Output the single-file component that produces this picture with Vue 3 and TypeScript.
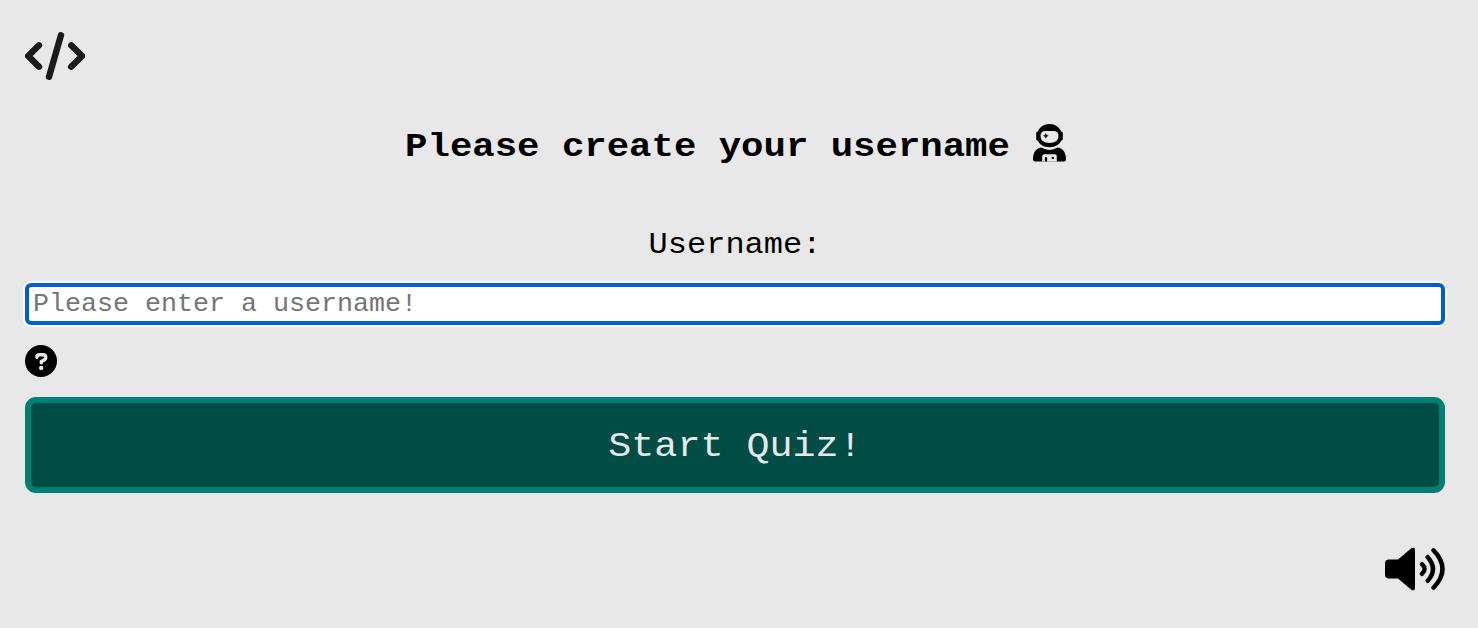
<script setup lang="ts">
import { ref } from 'vue'

const username = ref('')
</script>

<template>
  <main class="page">
    <svg class="code" viewBox="0 0 60 48" aria-hidden="true">
      <path d="M14 13.3 3.2 24 14 34.7M46.200 13.300 57 24 46.200 34.700M36 3.200 24 44.800" />
    </svg>
    <h1 class="title">
      <span class="heading-text">Please create your username</span>
      <svg class="astronaut" viewBox="0 0 34 38" aria-hidden="true">
        <path fill-rule="evenodd" d="M4.800 7.500C6.600 3 11 0 16.500 0s9.900 3 11.700 7.500q1.600.1 1.600 1.600v6q0 1.500-1.700 1.700C26.300 20.800 22 23.200 16.500 23.200S6.700 20.800 4.900 16.800Q3.200 16.600 3.200 15.100v-6q0-1.500 1.600-1.600ZM12.500 7Q7.500 7 7.500 11.700q0 7.200 9 7.200t9-7.200Q25.500 7 20.500 7Z" />
        <path d="m12.800 9 .9 1.900 2 .9-2 .9-.9 2-.9-2-2-.9 2-.9Z" />
        <path d="M8.200 23.600q8.300 4.800 16.600 0C31 24.500 33 30 33 35.500q0 2-2 2H2q-2 0-2-2C0 30 2 24.500 8.200 23.600Z" />
        <path class="suit" d="M9.200 32.200q0-2 2-2h10.600q2 0 2 2v5.300H9.200Z" />
        <path d="M11.900 34.200q0-1.100 1.100-1.100t1.100 1.100v3.300h-2.200Z" />
        <circle cx="19.800" cy="33.900" r="1.200" />
      </svg>
    </h1>
    <label class="label" for="username"><span class="label-text">Username:</span></label>
    <input id="username" v-model="username" class="field" type="text" placeholder="Please enter a username!" />
    <svg class="help" viewBox="0 0 32 32" aria-label="Help">
      <circle cx="16" cy="16" r="16" />
      <path d="M11.900 12.200Q11.900 9.800 14.600 9.800h3q3.200 0 3.200 2.700 0 1.500-1.600 2.400L16.300 16.500v1.300" />
      <circle class="dot" cx="16.200" cy="22.900" r="2.200" />
    </svg>
    <button class="start" type="button"><span class="start-text">Start Quiz!</span></button>
    <svg class="volume" viewBox="0 0 60 44" aria-label="Sound on">
      <path d="M4 12.500h9L26.300 1.300Q27.500.3 28.700.8 30 1.300 30 3v38q0 1.700-1.300 2.200-1.200.5-2.400-.5L13 31.500H4q-4 0-4-4v-11q0-4 4-4Z" />
      <path class="wave" d="M37 17.200q5.200 4.800 0 9.600M42.700 10.200Q53.300 22 42.700 33.800M48.500 3.300Q66.500 22 48.500 40.700" />
    </svg>
  </main>
</template>

<style>
html,
body {
  background: #e8e8e8;
}
</style>

<style scoped>
.page {
  display: flex;
  flex-direction: column;
  box-sizing: border-box;
  height: 628px;
  padding: 32px 33px 0 25px;
  overflow: hidden;
  background: #e8e8e8;
  color: #000;
  font-family: "Courier New", "Liberation Mono", monospace;
}
svg {
  display: block;
  flex: none;
}
.code {
  width: 60px;
  height: 48px;
  fill: none;
  stroke: #1b1b1b;
  stroke-width: 6.400;
  stroke-linecap: round;
  stroke-linejoin: round;
}
.title {
  display: flex;
  justify-content: center;
  gap: 23px;
  height: 42px;
  margin: 44px 0 0;
  padding-left: 2px;
  font-size: 37.333px;
  line-height: 42px;
  white-space: pre;
}
.heading-text,
.label-text,
.start-text {
  display: inline-block;
  transform: scaleY(0.9);
  transform-origin: 50% 100%;
}
.astronaut {
  width: 34px;
  height: 38px;
}
.suit {
  fill: #e8e8e8;
}
.label {
  height: 36px;
  margin-top: 60px;
  font-size: 32px;
  line-height: 36px;
  text-align: center;
}
.field {
  box-sizing: border-box;
  width: 100%;
  height: 42px;
  margin: 21px 0 0;
  padding: 0 5px 0 4px;
  border: 4px solid #005fd2;
  border-radius: 6px;
  outline: 0;
  box-shadow: 0 0 0 2px #fff;
  background: #fff;
  color: #000;
  font: 26.667px "Courier New", "Liberation Mono", monospace;
}
.field::placeholder {
  color: #757575;
  opacity: 1;
}
.help {
  width: 32px;
  height: 32px;
  margin-top: 20px;
}
.help path {
  fill: none;
  stroke: #e8e8e8;
  stroke-width: 3.400;
  stroke-linecap: round;
  stroke-linejoin: round;
}
.help .dot {
  fill: #e8e8e8;
}
.start {
  box-sizing: border-box;
  width: 100%;
  height: 96px;
  margin: 20px 0 0;
  padding: 0;
  border: 6px solid #008075;
  border-radius: 11px;
  background: #004d45;
  color: #e8e8e8;
  font: 38.4px "Courier New", "Liberation Mono", monospace;
}
.volume {
  align-self: flex-end;
  width: 60px;
  height: 44px;
  margin-top: 54px;
}
.wave {
  fill: none;
  stroke: #000;
  stroke-width: 4.400;
  stroke-linecap: round;
}
</style>
